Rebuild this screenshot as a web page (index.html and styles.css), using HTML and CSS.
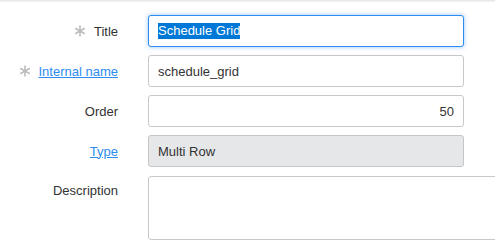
FILE: index.html
```html
<!DOCTYPE html>
<html>
  <head>
    <meta name="viewport" content="width=device-width, initial-scale=1" />
    <link rel="stylesheet" href="styles.css">
  </head>
  <body>
    <div class="topbar"></div>
    <form class="form">
      <div class="row">
        <label class="label">
          <svg class="req" width="12" height="12" viewBox="0 0 12 12"><path d="M6 0.5V11.5M1.2 3.2L10.8 8.8M1.2 8.8L10.8 3.2" /></svg>
          Title
        </label>
        <div class="field focused"><span class="selected">Schedule Grid</span></div>
      </div>
      <div class="row">
        <label class="label">
          <svg class="req" width="12" height="12" viewBox="0 0 12 12"><path d="M6 0.5V11.5M1.2 3.2L10.8 8.8M1.2 8.8L10.8 3.2" /></svg>
          <a href="#">Internal name</a>
        </label>
        <input class="field" type="text" value="schedule_grid" />
      </div>
      <div class="row">
        <label class="label">Order</label>
        <input class="field number" type="text" value="50" />
      </div>
      <div class="row">
        <label class="label"><a href="#">Type</a></label>
        <input class="field readonly" type="text" value="Multi Row" readonly />
      </div>
      <div class="row">
        <label class="label top">Description</label>
        <textarea class="field area"></textarea>
      </div>
    </form>
  </body>
</html>
```
FILE: styles.css
```css
body {
  margin: 0;
  font-family: "Liberation Sans", Arial, Helvetica, sans-serif;
  font-size: 13px;
  color: #333;
  background: white;
}

* {
  box-sizing: border-box;
}

/* faint shadow along the top edge */
.topbar {
  height: 2px;
  background: linear-gradient(#e4e4e4, #f6f6f6);
}

.form {
  padding-top: 13px;
}

.row {
  display: grid;
  grid-template-columns: 118px 316px;
  column-gap: 30px;
  align-items: center;
  margin-bottom: 8px;
}

.label {
  display: flex;
  justify-content: flex-end;
  align-items: center;
  gap: 8px;
  color: #333;
}

.label.top {
  align-self: start;
  padding-top: 8px;
}

.label a {
  color: #2d8cf0;
}

.req {
  stroke: #bcbcbc;
  stroke-width: 1.6;
  fill: none;
}

/* inputs */
.field {
  display: block;
  width: 316px;
  height: 32px;
  margin: 0;
  padding: 0 9px;
  border: 1px solid #c8c8cc;
  border-radius: 3px;
  font-family: inherit;
  font-size: 13px;
  color: #333;
  background: white;
  outline: none;
}

.focused {
  display: flex;
  align-items: center;
  border-color: #2d8cf0;
  box-shadow: 0 0 4px rgba(45, 140, 240, 0.5);
}

.selected {
  background: #0078d7;
  color: white;
  line-height: 16px;
}

.number {
  text-align: right;
}

.readonly {
  background: #e6e7e9;
  border-color: #c6c6c9;
}

.area {
  width: 360px;
  height: 64px;
  margin-top: 1px;
  resize: none;
}
```
